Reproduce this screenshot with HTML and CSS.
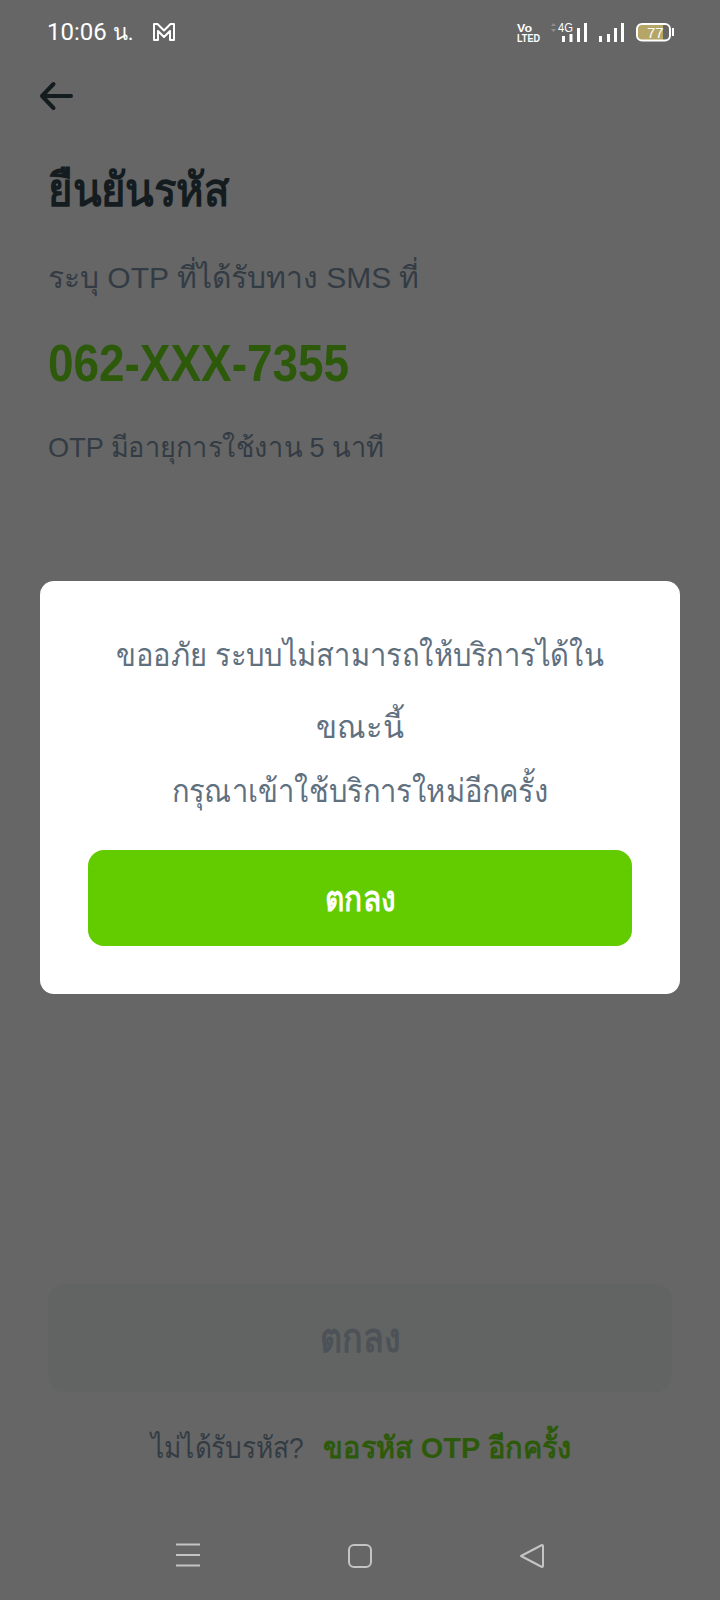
FILE: index.html
```html
<!DOCTYPE html>
<html lang="th">
<head>
<meta charset="utf-8">
<title>ยืนยันรหัส</title>
<link rel="stylesheet" href="styles.css">
</head>
<body>
<div class="screen">
  <div class="status">
    <div class="status-left">
      <span class="time">10:06 <span class="time-th">น.</span></span>
      <svg class="gmail" width="24" height="20" viewBox="0 0 24 20"><path d="M2 18V2h3.500L12 8.500 18.500 2H22v16h-4V9l-6 6-6-6v9z" fill="none" stroke="#fff" stroke-width="2" stroke-linejoin="round"/></svg>
    </div>
    <svg class="status-right" width="170" height="24" viewBox="0 0 170 24">
      <g fill="#fff">
        <text class="st" x="7" y="12" textLength="15" lengthAdjust="spacingAndGlyphs">Vo</text>
        <text class="st" x="7" y="22" textLength="23" lengthAdjust="spacingAndGlyphs">LTED</text>
        <text class="st4" x="48" y="12" textLength="15" lengthAdjust="spacingAndGlyphs">4G</text>
        <path d="M41 6l2.500-3 2.500 3zM41 9l2.500 3 2.500-3z" fill="#8f8f8f"/>
        <rect x="52" y="16" width="3" height="6"/><rect x="59.500" y="14" width="3" height="8"/><rect x="67" y="8" width="3" height="14"/><rect x="74" y="3" width="3" height="19"/>
        <rect x="89" y="16" width="3" height="6"/><rect x="97" y="14" width="3" height="8"/><rect x="104" y="8" width="3" height="14"/><rect x="111" y="3" width="3" height="19"/>
        <path d="M131 4h22v16h-22a4 4 0 0 1-4-4v-8a4 4 0 0 1 4-4z" fill="#b5a566"/>
        <rect x="127" y="4" width="33" height="16.500" rx="5" fill="none" stroke="#fff" stroke-width="2"/>
        <rect x="162" y="8" width="2" height="8"/>
        <text class="bat" x="137" y="18">77</text>
      </g>
    </svg>
  </div>

  <div class="content">
    <svg class="back" width="36" height="32" viewBox="0 0 36 32"><path d="M33 16H4M15.500 4L4 16l11.500 12" fill="none" stroke="#141c20" stroke-width="4" stroke-linecap="round" stroke-linejoin="round"/></svg>
    <h1 class="title">ยืนยันรหัส</h1>
    <p class="sub">ระบุ OTP ที่ได้รับทาง SMS ที่</p>
    <p class="phone">062-XXX-7355</p>
    <p class="expiry">OTP มีอายุการใช้งาน 5 นาที</p>
  </div>

  <div class="actions">
    <div class="btn-disabled"><span class="btn-label-disabled">ตกลง</span></div>
    <p class="resend"><span class="ask">ไม่ได้รับรหัส?</span><a class="link">ขอรหัส OTP อีกครั้ง</a></p>
  </div>

  <div class="nav">
    <svg width="26" height="24" viewBox="0 0 26 24"><path d="M1 1.500h24M1 12h24M1 22.500h24" stroke="#c4c4c4" stroke-width="2"/></svg>
    <svg width="26" height="26" viewBox="0 0 26 26"><rect x="2" y="2" width="22" height="22" rx="5" fill="none" stroke="#c4c4c4" stroke-width="2"/></svg>
    <svg width="26" height="26" viewBox="0 0 26 26"><path d="M2 13L23 2a1 1 0 0 1 1 1v20a1 1 0 0 1-1 1z" fill="none" stroke="#c4c4c4" stroke-width="2" stroke-linejoin="round"/></svg>
  </div>

  <div class="dialog">
    <p class="msg">ขออภัย ระบบไม่สามารถให้บริการได้ใน</p>
    <p class="msg msg-tail">ขณะนี้</p>
    <p class="msg msg2">กรุณาเข้าใช้บริการใหม่อีกครั้ง</p>
    <div class="btn"><span class="btn-label">ตกลง</span></div>
  </div>
</div>
</body>
</html>
```

FILE: styles.css
```css
* { box-sizing: border-box; }
html, body { margin: 0; padding: 0; }
body { background: #666666; font-family: "Liberation Sans", "Noto Sans", sans-serif; }
.screen { position: relative; width: 720px; height: 1600px; display: flex; flex-direction: column; background: #666666; overflow: hidden; }

.status { height: 64px; padding: 16px 40px 0 47px; display: flex; justify-content: space-between; align-items: flex-start; }
.status-left { display: flex; align-items: center; gap: 18px; height: 32px; }
.time { color: #fff; font-family: "Roboto", sans-serif; font-size: 24px; }
.time-th { font-size: 22px; }
.status-right { margin-top: 4px; }
.st { font: 700 11px "Liberation Sans", sans-serif; }
.st4 { font: 400 12px "Liberation Sans", sans-serif; }
.bat { font: 400 15px "Liberation Sans", sans-serif; }

.content { padding: 16px 48px 0; }
.back { display: block; margin-left: -10px; }
.title { margin: 47px 0 0; font-size: 46px; line-height: 62px; font-weight: 700; color: #141c20; transform: scaleX(.91); transform-origin: left center; }
.sub { margin: 35px 0 0; font-size: 30px; line-height: 44px; color: #333c44; }
.phone { margin: 36px 0 0; font-size: 51px; line-height: 56px; font-weight: 700; color: #2d5a0a; transform: scaleX(.9); transform-origin: left center; }
.expiry { margin: 34px 0 0; font-size: 28px; line-height: 44px; color: #333c44; transform: scaleX(.97); transform-origin: left center; }

.actions { margin-top: auto; padding: 0 48px; }
.btn-disabled { height: 108px; border-radius: 16px; background: #626463; display: flex; align-items: center; justify-content: center; }
.btn-label-disabled { font-size: 40px; font-weight: 700; color: #4c5257; transform: scaleX(.85); }
.resend { margin: 31px 0 0; padding-right: 10px; display: flex; justify-content: center; gap: 19px; font-size: 30px; line-height: 50px; color: #333c44; }
.ask { transform: scaleX(.875); transform-origin: right center; }
.link { color: #2d5a0a; font-weight: 700; transform: scaleX(.965); transform-origin: left center; }

.nav { height: 127px; padding: 70px 175px 0; display: flex; justify-content: space-between; align-items: flex-start; }

.dialog { position: absolute; left: 40px; top: 581px; width: 640px; height: 413px; padding: 38px 48px 48px; background: #fff; border-radius: 14px; text-align: center; }
.msg { margin: 0; font-size: 32px; line-height: 72px; color: #5f707f; transform: scaleX(.91); }
.msg-tail { transform: scaleX(.96); }
.msg2 { line-height: 56px; margin-top: 0; }
.btn { position: absolute; left: 48px; right: 48px; bottom: 48px; height: 96px; border-radius: 16px; background: #63cc00; display: flex; align-items: center; justify-content: center; }
.btn-label { font-size: 36px; font-weight: 700; color: #fff; transform: scaleX(.83); }
```
